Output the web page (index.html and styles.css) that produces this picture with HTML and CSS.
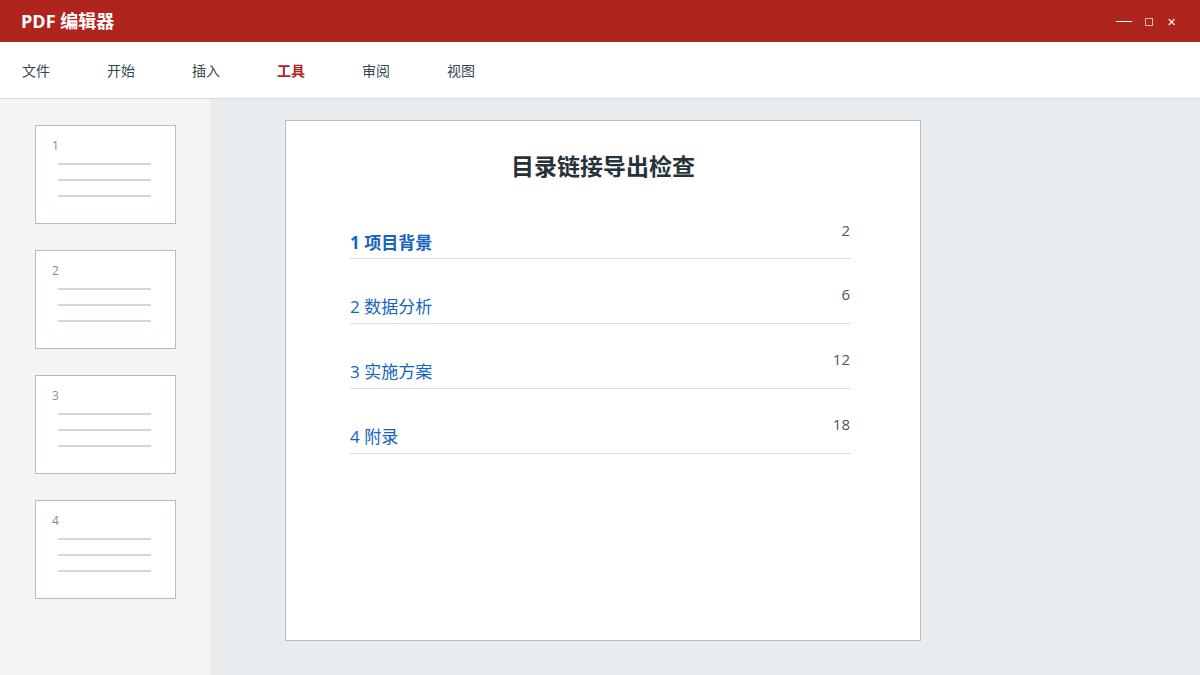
FILE: index.html
```html
<!DOCTYPE html>
<html lang="zh">
<head>
<meta charset="utf-8">
<link rel="stylesheet" href="styles.css">
</head>
<body>
<div class="app">
  <header class="titlebar">
    <div class="app-title">PDF 编辑器</div>
    <div class="win-controls">
      <span class="wc-min"></span>
      <span class="wc-max"></span>
      <span class="wc-close">✕</span>
    </div>
  </header>
  <nav class="menubar">
    <span class="menu-item">文件</span>
    <span class="menu-item">开始</span>
    <span class="menu-item">插入</span>
    <span class="menu-item active">工具</span>
    <span class="menu-item">审阅</span>
    <span class="menu-item">视图</span>
  </nav>
  <div class="workspace">
    <aside class="sidebar">
      <div class="thumb"><span class="thumb-num">1</span><i class="tl"></i><i class="tl"></i><i class="tl"></i></div>
      <div class="thumb"><span class="thumb-num">2</span><i class="tl"></i><i class="tl"></i><i class="tl"></i></div>
      <div class="thumb"><span class="thumb-num">3</span><i class="tl"></i><i class="tl"></i><i class="tl"></i></div>
      <div class="thumb"><span class="thumb-num">4</span><i class="tl"></i><i class="tl"></i><i class="tl"></i></div>
    </aside>
    <main class="canvas">
      <section class="page">
        <h1 class="page-title">目录链接导出检查</h1>
        <div class="toc">
          <div class="toc-row first"><span class="toc-text">1 项目背景</span><span class="toc-num">2</span></div>
          <div class="toc-row"><span class="toc-text">2 数据分析</span><span class="toc-num">6</span></div>
          <div class="toc-row"><span class="toc-text">3 实施方案</span><span class="toc-num">12</span></div>
          <div class="toc-row"><span class="toc-text">4 附录</span><span class="toc-num">18</span></div>
        </div>
      </section>
    </main>
  </div>
</div>
</body>
</html>
```
FILE: styles.css
```css
* { box-sizing: border-box; margin: 0; padding: 0; }
html, body { width: 1200px; height: 675px; overflow: hidden; }
body {
  font-family: "Open Sans", "Noto Sans CJK SC", sans-serif;
  background: #e8ecef;
}
.app { display: flex; flex-direction: column; height: 675px; }

.titlebar {
  height: 42px;
  background: #b0241e;
  display: flex;
  align-items: center;
  justify-content: space-between;
  padding: 0 24px 0 21px;
  color: #fff;
  flex: none;
}
.app-title { font-size: 18px; font-weight: 700; line-height: 1; }
.win-controls { display: flex; align-items: center; }
.wc-min { width: 16px; height: 1.5px; background: #fff; margin-right: 13px; margin-top: 1px; }
.wc-max { width: 8px; height: 8px; border: 1px solid #f2b8b4; margin-right: 14px; margin-top: 2px; }
.wc-close { font-size: 11px; line-height: 1; color: #fff; margin-top: 1px; }

.menubar {
  height: 57px;
  background: #fff;
  border-bottom: 1px solid #d5dde2;
  display: flex;
  align-items: center;
  padding-left: 22px;
  flex: none;
}
.menu-item {
  width: 85px;
  font-size: 14px;
  color: #37474f;
  line-height: 1;
  padding-top: 1px;
}
.menu-item.active { color: #b0241e; font-weight: 700; }

.workspace { flex: 1; display: flex; min-height: 0; }
.sidebar {
  width: 211px;
  background: #f4f4f4;
  display: flex;
  flex-direction: column;
  gap: 26px;
  padding: 26px 0 0 35px;
  flex: none;
}
.thumb {
  width: 141px;
  height: 99px;
  background: #fff;
  border: 1px solid #b0bec5;
  padding: 12px 0 0 16px;
  display: flex;
  flex-direction: column;
}
.thumb-num { font-size: 12px; color: #78909c; line-height: 16px; height: 25px; }
.tl { display: block; width: 93px; height: 2px; background: #cfd8dc; margin: 0 0 14px 6px; }

.canvas { flex: 1; padding: 21px 0 0 74px; }
.page {
  width: 636px;
  height: 521px;
  background: #fff;
  border: 1px solid #b0bec5;
  padding: 29px 69px 0 64px;
}
.page-title {
  text-align: center;
  font-size: 23px;
  font-weight: 700;
  color: #263238;
  line-height: 32px;
  margin-left: 5px;
}
.toc { margin-top: 13px; width: 501px; }
.toc-row {
  height: 65px;
  display: flex;
  justify-content: space-between;
  align-items: flex-start;
  border-bottom: 1px solid #d5dfe5;
}
.toc-row:first-child { height: 64px; }
.toc-text { font-size: 17px; color: #1565c0; line-height: 24px; margin-top: 36px; }
.toc-row.first .toc-text { font-weight: 700; }
.toc-num { font-size: 15px; color: #455a64; line-height: 20px; margin-top: 25px; padding-right: 1px; }
```
